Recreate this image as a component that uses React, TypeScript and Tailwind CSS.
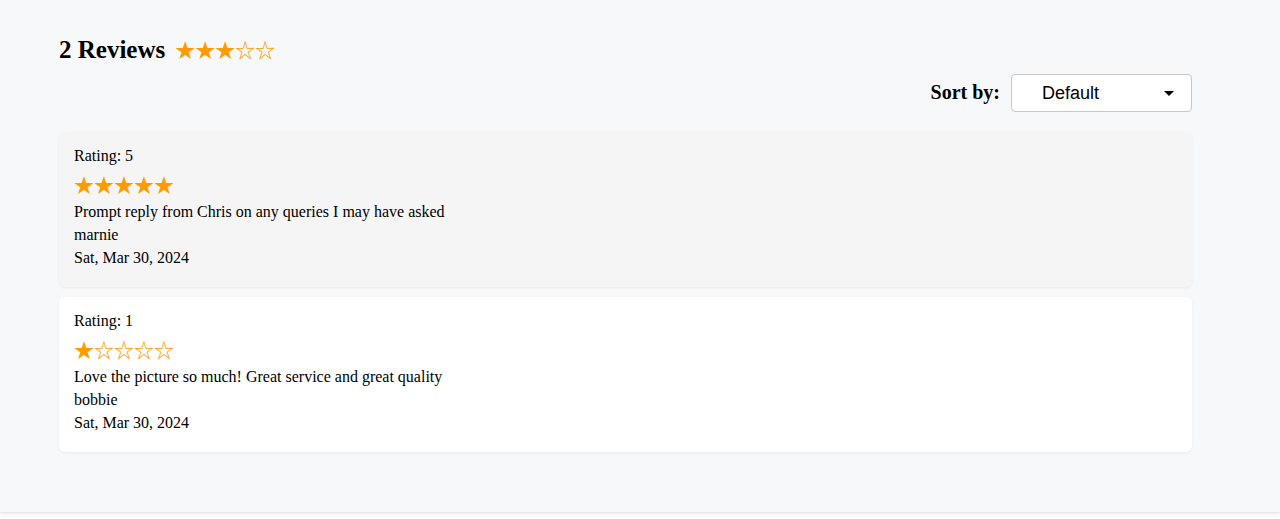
import React from "react";

const Stars = ({ n }: { n: number }) => (
  <span
    className="text-[#ff9a00] text-[20px] leading-[24px] whitespace-nowrap"
    style={{ fontFamily: '"Noto Sans CJK JP", "DejaVu Sans", sans-serif' }}
  >
    {"★★★★★".slice(0, n) + "☆☆☆☆☆".slice(0, 5 - n)}
  </span>
);

const Card = ({ rating, text, name, bg }: { rating: number; text: string; name: string; bg: string }) => (
  <div className={`${bg} rounded-[6px] shadow-[0_1px_3px_rgba(0,0,0,0.06)] px-[15px] pt-[15px] pb-[18px] text-[16px] text-black`}>
    <div className="leading-[18px] h-[18px]">Rating: {rating}</div>
    <div className="mt-[5px] h-[30px] flex items-center">
      <Stars n={rating} />
    </div>
    <div className="leading-[23px]">{text}</div>
    <div className="leading-[23px]">{name}</div>
    <div className="leading-[23px]">Sat, Mar 30, 2024</div>
  </div>
);

export default function App() {
  return (
    <div className="h-[519px] bg-white" style={{ fontFamily: '"Liberation Serif", serif' }}>
      <div className="h-[513px] bg-[#f7f8fa] border-b border-[#e6e6e6] shadow-[0_2px_4px_rgba(0,0,0,0.06)] pt-[36px]">
        <div className="mx-[59px] w-[1133px]">
          <div className="flex items-center h-[28px]">
            <h2 className="text-[25px] font-bold leading-[28px] text-black">2 Reviews</h2>
            <span className="ml-[10px] flex items-center">
              <Stars n={3} />
            </span>
          </div>
          <div className="mt-[10px] flex justify-end items-center h-[38px]">
            <span className="text-[20px] font-bold text-black mr-[11px] -mt-[3px]">Sort by:</span>
            <div className="w-[181px] h-[38px] bg-white border border-[#c8c8c8] rounded-[4px] flex items-center justify-between pl-[30px] pr-[17px]" style={{ fontFamily: '"Liberation Sans", Arial, sans-serif' }}>
              <span className="text-[18px] text-black">Default</span>
              <svg width="10" height="5" viewBox="0 0 10 5"><path d="M0 0h10L5 5z" fill="#000" /></svg>
            </div>
          </div>
          <div className="mt-[20px] flex flex-col gap-[10px]">
            <Card bg="bg-[#f5f5f5]" rating={5} text="Prompt reply from Chris on any queries I may have asked" name="marnie" />
            <Card bg="bg-white" rating={1} text="Love the picture so much! Great service and great quality" name="bobbie" />
          </div>
        </div>
      </div>
    </div>
  );
}
